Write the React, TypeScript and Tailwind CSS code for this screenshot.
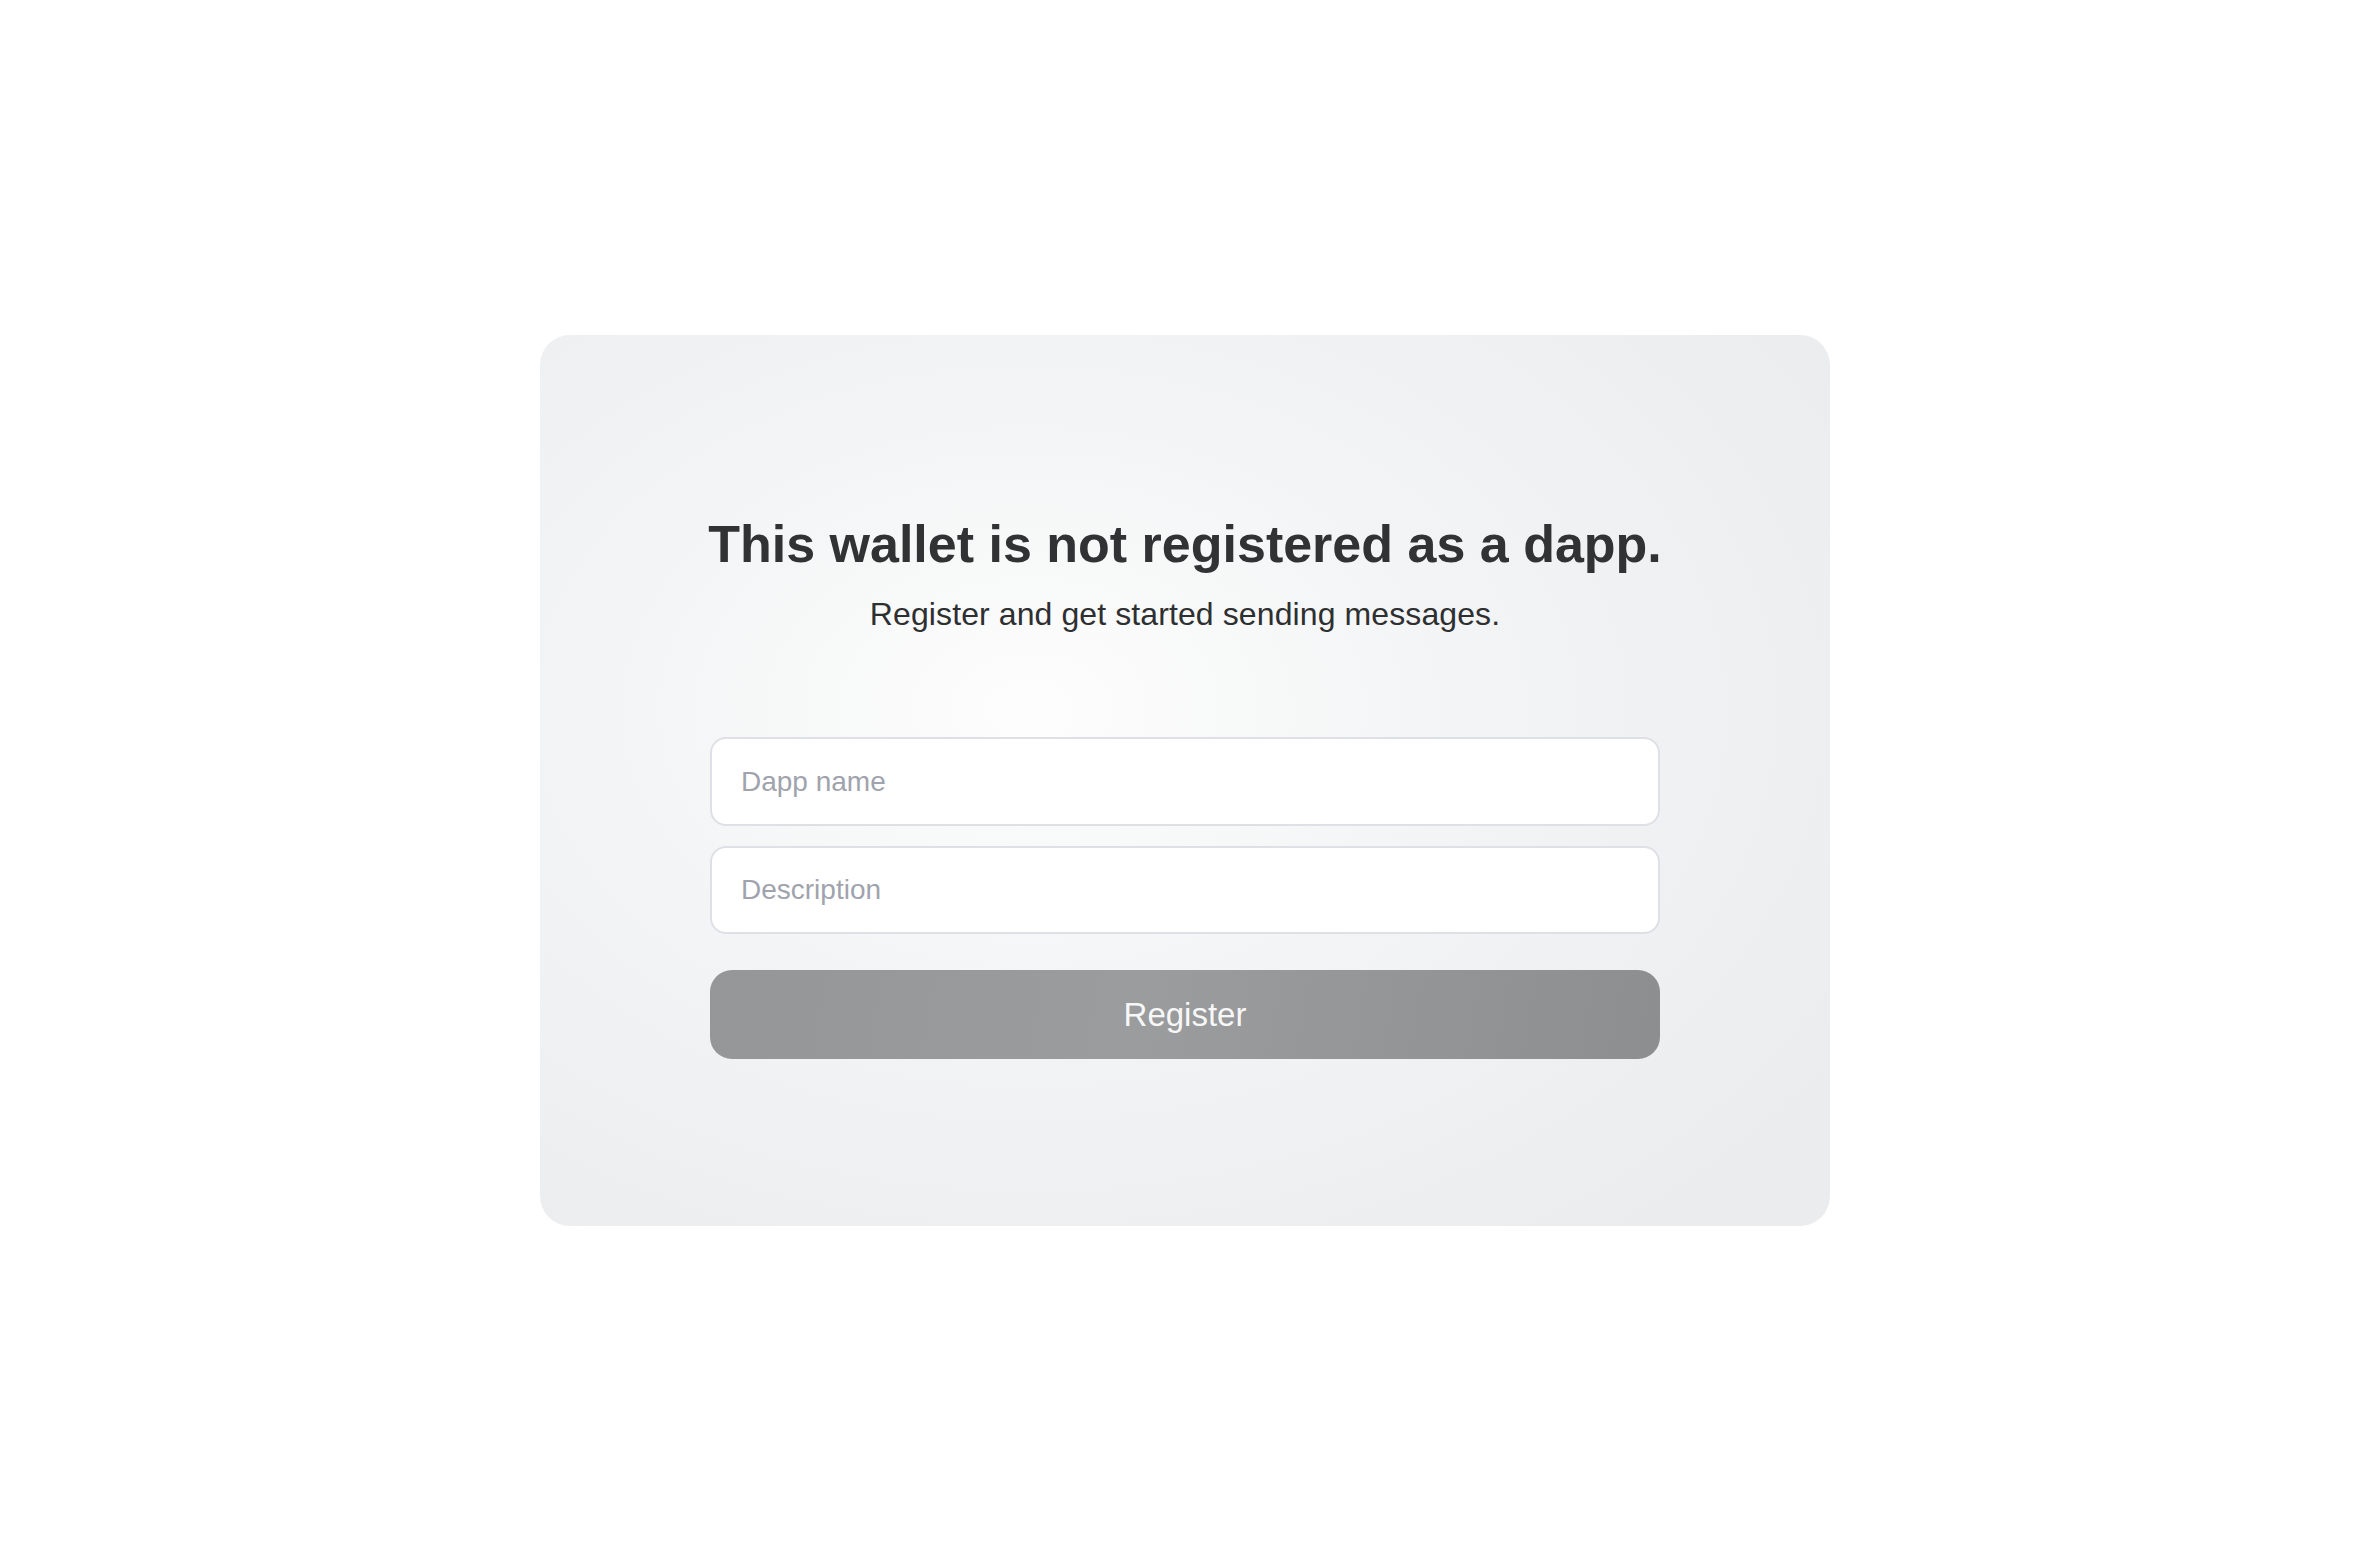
import React, { useState } from 'react';

const App: React.FC = () => {
  const [name, setName] = useState('');
  const [description, setDescription] = useState('');

  return (
    <div className="min-h-screen w-full bg-white flex items-center justify-center pb-[5px] pl-[3px] font-['Liberation_Sans',Arial,sans-serif]">
      {/* Register card */}
      <div className="w-[1290px] h-[891px] rounded-[30px] bg-[radial-gradient(ellipse_75%_75%_at_38%_42%,#fdfdfd_0%,#f3f4f5_45%,#ebecee_100%)] flex flex-col items-center pt-[183px]">
        <div className="w-[950px] flex flex-col items-center">
          <h1 className="text-[52px] leading-[52px] font-bold text-[#313234] whitespace-nowrap">
            This wallet is not registered as a dapp.
          </h1>
          <p className="mt-[28px] text-[32px] leading-[32px] tracking-[0.1px] text-[#2e2f31]">
            Register and get started sending messages.
          </p>

          <form className="w-full mt-[107px] flex flex-col" onSubmit={(e) => e.preventDefault()}>
            <input
              value={name}
              onChange={(e) => setName(e.target.value)}
              placeholder="Dapp name"
              className="w-full h-[89px] rounded-[16px] border-2 border-[#dfdfe6] bg-white px-[29px] text-[28px] text-[#333] placeholder:text-[#9fa3ad] outline-none"
            />
            <input
              value={description}
              onChange={(e) => setDescription(e.target.value)}
              placeholder="Description"
              className="w-full h-[88px] mt-[20px] rounded-[16px] border-2 border-[#dfdfe6] bg-white px-[29px] text-[28px] text-[#333] placeholder:text-[#9fa3ad] outline-none"
            />
            <button
              type="submit"
              className="w-full h-[89px] mt-[36px] rounded-[22px] bg-[linear-gradient(100deg,#959697_0%,#9b9c9d_45%,#8d8e8f_100%)] text-[33px] text-[#f7f7f7] flex items-center justify-center"
            >
              Register
            </button>
          </form>
        </div>
      </div>
    </div>
  );
};

export default App;
